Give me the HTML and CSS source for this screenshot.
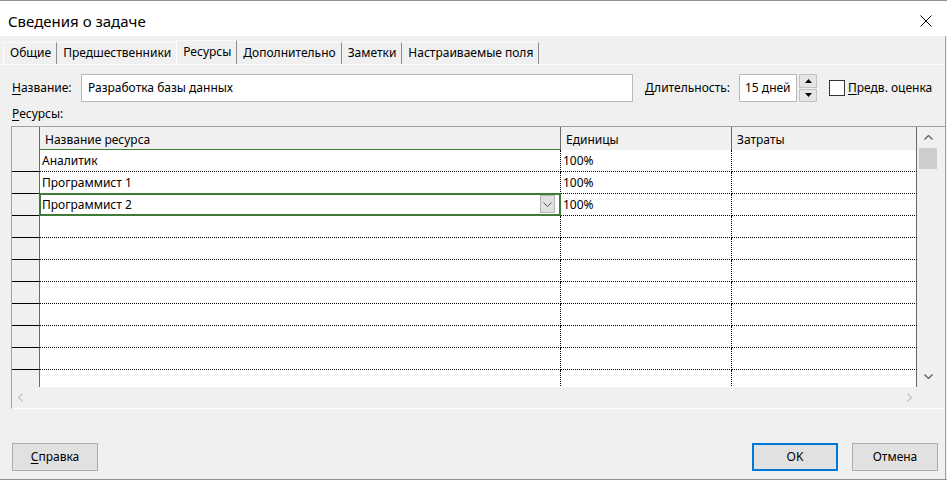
FILE: index.html
```html
<!DOCTYPE html>
<html lang="ru">
<head>
<meta charset="utf-8">
<title>Сведения о задаче</title>
<link rel="stylesheet" href="styles.css">
</head>
<body>
<div class="window">
  <header class="titlebar">
    <span class="title">Сведения о задаче</span>
    <svg class="close" width="12" height="12" viewBox="0 0 12 12"><path d="M0.5 0.5 L11.5 11.5 M11.5 0.5 L0.5 11.5" stroke="#000" stroke-width="1" fill="none"/></svg>
  </header>
  <div class="content">
    <nav class="tabs">
      <span class="tab first">Общие</span>
      <span class="tab">Предшественники</span>
      <span class="tab active">Ресурсы</span>
      <span class="tab">Дополнительно</span>
      <span class="tab">Заметки</span>
      <span class="tab">Настраиваемые поля</span>
    </nav>
    <section class="panel">
      <div class="name-row">
        <span class="lbl lbl-name"><u>Н</u>азвание:</span>
        <div class="field field-name">Разработка базы данных</div>
        <span class="lbl lbl-dur"><u>Д</u>лительность:</span>
        <div class="field field-dur">15 дней</div>
        <div class="spin">
          <span class="spin-btn"><svg width="7" height="4" viewBox="0 0 7 4"><path d="M3.5 0 L7 4 L0 4 Z" fill="#000"/></svg></span>
          <span class="spin-btn"><svg width="7" height="4" viewBox="0 0 7 4"><path d="M0 0 L7 0 L3.5 4 Z" fill="#000"/></svg></span>
        </div>
        <span class="check"></span>
        <span class="lbl lbl-est"><u>П</u>редв. оценка</span>
      </div>
      <div class="lbl lbl-res"><u>Р</u>есурсы:</div>
      <div class="grid">
        <div class="grid-top">
          <div class="table">
            <div class="trow thead">
              <div class="c rh"></div>
              <div class="c name active-col">Название ресурса</div>
              <div class="c units">Единицы</div>
              <div class="c cost">Затраты</div>
            </div>
            <div class="tbody">
              <div class="trow"><div class="c rh"></div><div class="c name">Аналитик</div><div class="c units">100%</div><div class="c cost"></div></div>
              <div class="trow"><div class="c rh"></div><div class="c name">Программист 1</div><div class="c units">100%</div><div class="c cost"></div></div>
              <div class="trow"><div class="c rh"></div><div class="c name selected">Программист 2<span class="dd"><svg width="9" height="5" viewBox="0 0 9 5"><path d="M0.5 0.5 L4.5 4.5 L8.5 0.5" stroke="#555" fill="none"/></svg></span></div><div class="c units">100%</div><div class="c cost"></div></div>
              <div class="trow"><div class="c rh"></div><div class="c name"></div><div class="c units"></div><div class="c cost"></div></div>
              <div class="trow"><div class="c rh"></div><div class="c name"></div><div class="c units"></div><div class="c cost"></div></div>
              <div class="trow"><div class="c rh"></div><div class="c name"></div><div class="c units"></div><div class="c cost"></div></div>
              <div class="trow"><div class="c rh"></div><div class="c name"></div><div class="c units"></div><div class="c cost"></div></div>
              <div class="trow"><div class="c rh"></div><div class="c name"></div><div class="c units"></div><div class="c cost"></div></div>
              <div class="trow"><div class="c rh"></div><div class="c name"></div><div class="c units"></div><div class="c cost"></div></div>
              <div class="trow"><div class="c rh"></div><div class="c name"></div><div class="c units"></div><div class="c cost"></div></div>
              <div class="trow"><div class="c rh"></div><div class="c name"></div><div class="c units"></div><div class="c cost"></div></div>
            </div>
          </div>
          <div class="vscroll">
            <span class="vs-arrow"><svg width="9" height="5" viewBox="0 0 9 5"><path d="M0.5 4.5 L4.5 0.5 L8.5 4.5" stroke="#606060" stroke-width="1.3" fill="none"/></svg></span>
            <span class="vs-thumb"></span>
            <span class="vs-fill"></span>
            <span class="vs-arrow"><svg width="9" height="5" viewBox="0 0 9 5"><path d="M0.5 0.5 L4.5 4.5 L8.5 0.5" stroke="#606060" stroke-width="1.3" fill="none"/></svg></span>
          </div>
        </div>
        <div class="hscroll">
          <svg width="5" height="9" viewBox="0 0 5 9"><path d="M4.5 0.5 L0.5 4.5 L4.5 8.5" stroke="#c4c4c4" stroke-width="1.3" fill="none"/></svg>
          <svg width="5" height="9" viewBox="0 0 5 9"><path d="M0.5 0.5 L4.5 4.5 L0.5 8.5" stroke="#c4c4c4" stroke-width="1.3" fill="none"/></svg>
        </div>
      </div>
    </section>
    <footer class="buttons">
      <span class="btn"><u>С</u>правка</span>
      <span class="spacer"></span>
      <span class="btn default">OK</span>
      <span class="btn">Отмена</span>
    </footer>
  </div>
</div>
</body>
</html>
```

FILE: styles.css
```css
* { box-sizing: border-box; margin: 0; padding: 0; }
html, body { width: 947px; height: 480px; overflow: hidden; background: #f0f0f0; }
body { font-family: "Noto Sans", "Open Sans", sans-serif; font-size: 12px; color: #000; }
u { text-decoration: underline; text-underline-offset: 2px; }

.window { width: 947px; height: 480px; display: flex; flex-direction: column; border-top: 1px solid #8f8f8f; border-bottom: 1px solid #8f8f8f; }

.titlebar { height: 35px; background: #fff; display: flex; align-items: flex-start; padding: 10px 15px 0 8px; flex: none; }
.title { font-size: 15px; line-height: 20px; flex: 1; }
.close { margin-top: 4px; }

.content { flex: 1; width: 946px; border-right: 1px solid #a0a0a0; display: flex; flex-direction: column; }

.tabs { height: 28px; display: flex; align-items: flex-end; padding-left: 3px; flex: none; }
.tab { height: 22px; line-height: 20px; padding: 0 5px 0 6px; border-right: 1px solid #8c8c8c; border-top: 1px solid #fafafa; }
.tab.first { border-left: 1px solid #fff; }
.tab.active { height: 24px; line-height: 22px; padding: 0 5px 0 6px; border-left: 1px solid #fff; margin-left: -1px; }

.panel { flex: none; border-top: 1px solid #fafafa; padding: 9px 0 0 0; }

.name-row { display: flex; align-items: center; height: 28px; padding-left: 12px; }
.lbl { line-height: 16px; white-space: nowrap; }
.lbl-name { width: 69px; }
.field { height: 28px; background: #fff; border: 1px solid #b9b9b9; line-height: 26px; padding-left: 6px; }
.field-name { width: 552px; }
.lbl-dur { margin-left: 12px; width: 94px; }
.field-dur { width: 58px; padding-left: 5px; }
.spin { margin-left: 2px; width: 18px; height: 28px; display: flex; flex-direction: column; gap: 1px; }
.spin-btn { flex: 1; background: #e5e5e5; border: 1px solid #c4c4c4; display: flex; align-items: center; justify-content: center; }
.check { margin-left: 12px; width: 16px; height: 16px; border: 1px solid #333; background: #fff; }
.lbl-est { margin-left: 3px; }

.lbl-res { margin: 3px 0 0 12px; height: 21px; line-height: 16px; padding-top: 1px; }

.grid { margin-left: 11px; width: 934px; height: 283px; border-top: 1px solid #a0a0a0; border-left: 1px solid #a0a0a0; border-bottom: 1px solid #fff; display: flex; flex-direction: column; }
.grid-top { display: flex; height: 260px; }
.table { width: 905px; }
.trow { display: grid; grid-template-columns: 28px 521px 171px 185px; height: 22px; }
.c { border-bottom: 1px dotted #000; border-right: 1px dotted #000; background: #fff; padding-left: 2px; line-height: 21px; white-space: nowrap; position: relative; }
.c.rh { background: #f0f0f0; border-bottom: 1px solid #000; border-right: 1px solid #6a6a6a; }
.c.cost { border-right: 1px solid #6a6a6a; }

.thead { height: 23px; }
.thead .c { background: #f0f0f0; border-right: 1px solid #6a6a6a; border-bottom: 1px solid #c8c8c8; padding-left: 5px; line-height: 18px; padding-top: 4px; }
.thead .c.rh { border-bottom: 1px solid #000; }
.thead .c.active-col { border-bottom: 2px solid #3f7a38; }

.tbody { height: 237px; overflow: hidden; }

.c.selected::after { content: ""; position: absolute; left: -1px; top: -1px; right: -1px; bottom: -1px; border: 2px solid #3f7a38; z-index: 2; }
.dd { position: absolute; right: 5px; top: 1px; width: 15px; height: 18px; background: #e1e1e1; border: 1px solid #b5b5b5; display: flex; align-items: center; justify-content: center; }

.vscroll { width: 28px; background: #f0f0f0; display: flex; flex-direction: column; padding-left: 2px; }
.vs-arrow { width: 18px; height: 21px; display: flex; align-items: center; justify-content: center; }
.vs-thumb { width: 18px; height: 21px; background: #cdcdcd; }
.vs-fill { flex: 1; }

.hscroll { height: 21px; background: #f0f0f0; display: flex; align-items: center; justify-content: space-between; padding: 0 33px 0 6px; }

.buttons { display: flex; margin-top: 34px; padding: 0 7px 0 12px; gap: 14px; }
.spacer { flex: 1; }
.btn { width: 86px; height: 28px; background: #e1e1e1; border: 1px solid #adadad; text-align: center; line-height: 26px; }
.btn.default { border: 2px solid #0078d7; line-height: 24px; }
```
